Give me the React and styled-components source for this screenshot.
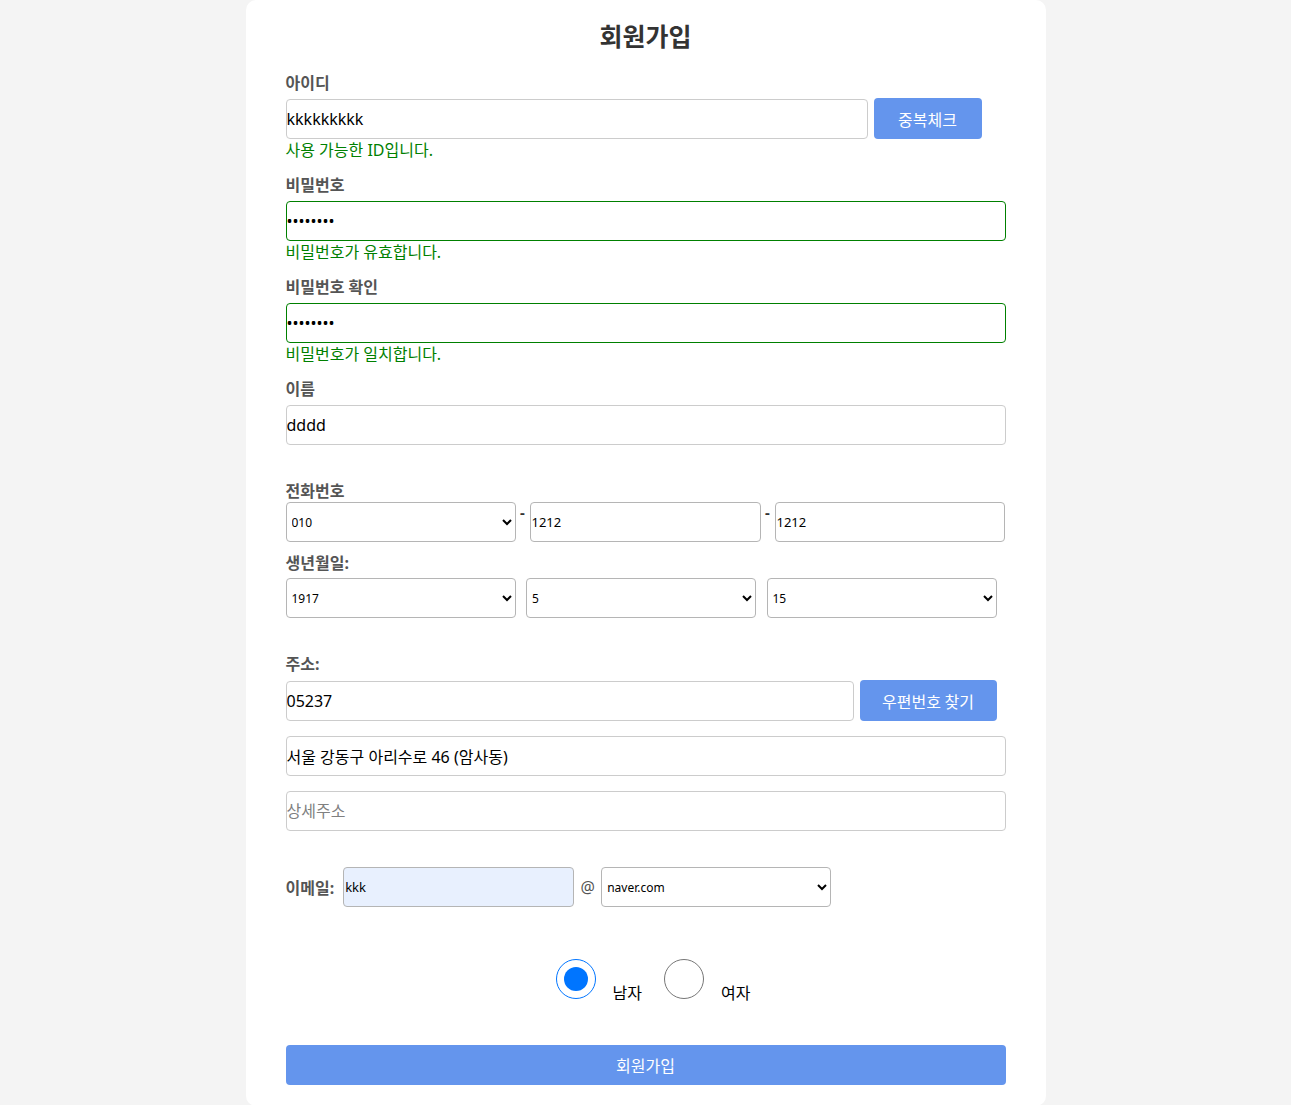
import React from 'react';
import styled, { createGlobalStyle } from 'styled-components';

const GlobalStyle = createGlobalStyle`
    body {
        margin: 0;
        background: #f4f4f4;
        font-family: "Noto Sans", "Noto Sans CJK KR", sans-serif;
    }
`

const Card = styled.div`
    width: 800px;
    box-sizing: border-box;
    margin: 0 auto;
    padding: 20px 40px 21px 40px;
    background: #fff;
    border-radius: 10px;
`

const Title = styled.h2`
    margin: 0 0 20px 0;
    font-size: 25px;
    line-height: 32px;
    text-align: center;
    color: #333;
    font-weight: bold;
`

const Group = styled.div`
    margin-bottom: ${props => props.mb || 13}px;
`

const Label = styled.label`
    display: block;
    font-size: 16px;
    line-height: 22px;
    color: #555;
    font-weight: bold;
    margin-bottom: ${props => props.mb === undefined ? 5 : props.mb}px;
`

const Row = styled.div`
    display: flex;
    align-items: ${props => props.align || 'center'};
    gap: ${props => props.gap || 0}px;
`

const Input = styled.input`
    box-sizing: border-box;
    height: 40px;
    width: ${props => props.w ? props.w + 'px' : '100%'};
    flex: ${props => props.w ? 'none' : '1'};
    padding: 0;
    border: 1px solid ${props => props.valid ? '#008000' : '#ccc'};
    border-radius: 4px;
    font-family: "Noto Sans", "Noto Sans CJK KR", sans-serif;
    font-size: 16px;
    color: #000;
    outline: none;

    &::placeholder {
        color: #808080;
    }
`

const SmallInput = styled.input`
    box-sizing: border-box;
    height: 40px;
    width: ${props => props.w}px;
    padding: 0 0 0 1px;
    border: 1px solid #b5b5b5;
    border-radius: 4px;
    background: ${props => props.filled ? '#e8f0fe' : '#fff'};
    font-family: "Noto Sans", sans-serif;
    font-size: 13px;
    color: #000;
    outline: none;
`

const Select = styled.select`
    box-sizing: border-box;
    height: 40px;
    width: ${props => props.w}px;
    border: 1px solid #b5b5b5;
    border-radius: 4px;
    background: #fff;
    font-family: "Noto Sans", sans-serif;
    font-size: 12px;
    color: #000;
    padding-left: 1px;
`

const Button = styled.button`
    box-sizing: border-box;
    flex: none;
    width: ${props => props.w ? props.w + 'px' : 'auto'};
    height: 41px;
    padding: 0;
    border: none;
    border-radius: 4px;
    background: #6495ed;
    color: #fff;
    font-family: "Noto Sans CJK KR", sans-serif;
    font-size: 16px;
    white-space: nowrap;
`

const Message = styled.div`
    height: 22px;
    line-height: 22px;
    font-size: 16px;
    color: #008000;
`

const Dash = styled.span`
    width: 14px;
    align-self: flex-start;
    text-align: center;
    font-size: 15px;
    font-weight: bold;
    line-height: 20px;
    color: #333;
`

const InlineLabel = styled.span`
    font-size: 16px;
    font-weight: bold;
    color: #555;
    margin-right: 9px;
`

const At = styled.span`
    width: 27px;
    text-align: center;
    font-size: 16px;
    color: #555;
`

const RadioRow = styled.div`
    display: flex;
    justify-content: center;
    align-items: flex-end;
    gap: 22px;
    padding-left: 15px;
    margin: 52px 0 46px 0;
`

const RadioOption = styled.label`
    display: flex;
    align-items: flex-end;
    gap: 17px;
    font-size: 16px;
    color: #000;
`

const Radio = styled.input`
    width: 40px;
    height: 40px;
    margin: 0;
`

const RadioText = styled.span`
    line-height: 22px;
    margin-bottom: -5px;
`

const SubmitButton = styled(Button)`
    width: 100%;
    height: 40px;
    display: block;
`

const Spacer = styled.div`
    flex: none;
    width: ${props => props.w}px;
`

const range = (a, b) => Array.from({ length: b - a + 1 }, (_, i) => a + i)

export default function App() {
    return (
        <Card>
            <GlobalStyle />
            <Title>회원가입</Title>

            <Group>
                <Label mb={4}>아이디</Label>
                <Row gap={6} align="flex-end">
                    <Input type="text" defaultValue="kkkkkkkkk" />
                    <Button w={108}>중복체크</Button>
                    <Spacer w={18} />
                </Row>
                <Message>사용 가능한 ID입니다.</Message>
            </Group>

            <Group>
                <Label>비밀번호</Label>
                <Input type="password" valid defaultValue="12345678" />
                <Message>비밀번호가 유효합니다.</Message>
            </Group>

            <Group>
                <Label>비밀번호 확인</Label>
                <Input type="password" valid defaultValue="12345678" />
                <Message>비밀번호가 일치합니다.</Message>
            </Group>

            <Group>
                <Label>이름</Label>
                <Input type="text" defaultValue="dddd" />
                <Message />
            </Group>

            <Group mb={10}>
                <Label mb={0}>전화번호</Label>
                <Row>
                    <Select w={230} defaultValue="010">
                        <option>010</option>
                        <option>011</option>
                        <option>016</option>
                    </Select>
                    <Dash>-</Dash>
                    <SmallInput w={231} defaultValue="1212" />
                    <Dash>-</Dash>
                    <SmallInput w={230} defaultValue="1212" />
                </Row>
            </Group>

            <Group mb={35}>
                <Label mb={4}>생년월일:</Label>
                <Row gap={10.5}>
                    <Select w={230} defaultValue="1917">
                        {range(1900, 2024).map(y => <option key={y}>{y}</option>)}
                    </Select>
                    <Select w={230} defaultValue="5">
                        {range(1, 12).map(m => <option key={m}>{m}</option>)}
                    </Select>
                    <Select w={230} defaultValue="15">
                        {range(1, 31).map(d => <option key={d}>{d}</option>)}
                    </Select>
                </Row>
            </Group>

            <Group mb={15}>
                <Label mb={5}>주소:</Label>
                <Row gap={6} align="flex-end">
                    <Input type="text" defaultValue="05237" />
                    <Button w={137}>우편번호 찾기</Button>
                    <Spacer w={3} />
                </Row>
            </Group>
            <Group mb={15}>
                <Input type="text" defaultValue="서울 강동구 아리수로 46 (암사동)" />
            </Group>
            <Group mb={36}>
                <Input type="text" placeholder="상세주소" />
            </Group>

            <Row>
                <InlineLabel>이메일:</InlineLabel>
                <SmallInput w={231} filled defaultValue="kkk" />
                <At>@</At>
                <Select w={230} defaultValue="naver.com">
                    <option>naver.com</option>
                    <option>gmail.com</option>
                    <option>daum.net</option>
                </Select>
            </Row>

            <RadioRow>
                <RadioOption>
                    <Radio type="radio" name="gender" defaultChecked />
                    <RadioText>남자</RadioText>
                </RadioOption>
                <RadioOption>
                    <Radio type="radio" name="gender" />
                    <RadioText>여자</RadioText>
                </RadioOption>
            </RadioRow>

            <SubmitButton>회원가입</SubmitButton>
        </Card>
    )
}
